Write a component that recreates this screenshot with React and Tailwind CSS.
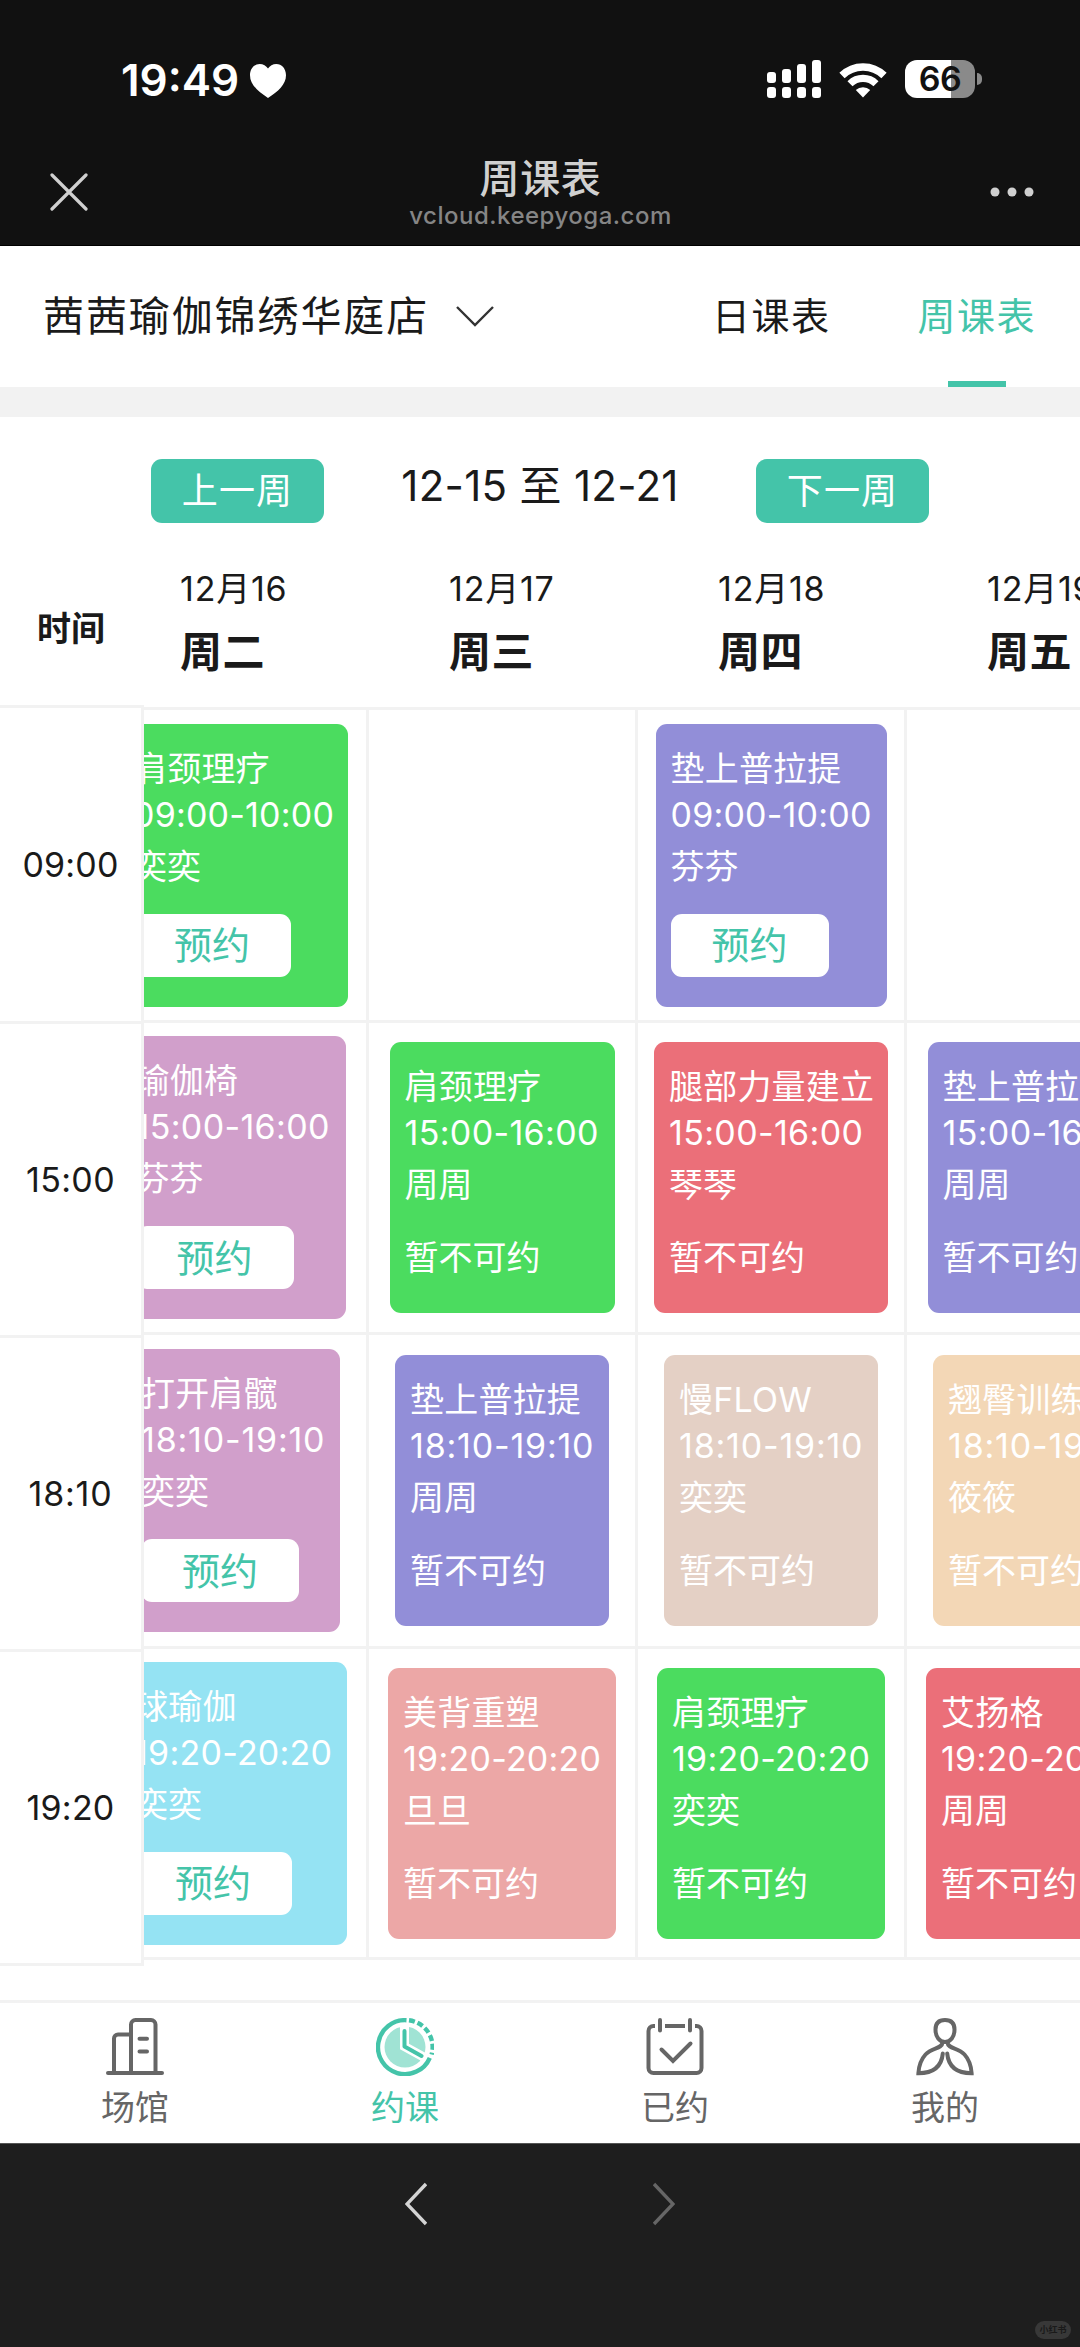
import React from "react";

const weekDays = [
  { date: "12月16", day: "周二" },
  { date: "12月17", day: "周三" },
  { date: "12月18", day: "周四" },
  { date: "12月19", day: "周五" },
];

const rows = [
  {
    time: "09:00",
    labelHeight: "h-[316px]",
    height: "h-[313px]",
    tracking: "tracking-[0.2px]",
    lessons: [
      { name: "肩颈理疗", time: "09:00-10:00", coach: "奕奕", open: true, color: "bg-[#4bdc5f]", width: "w-[230px]" },
      null,
      { name: "垫上普拉提", time: "09:00-10:00", coach: "芬芬", open: true, color: "bg-[#928ed8]", width: "w-[231px]" },
      null,
    ],
  },
  {
    time: "15:00",
    labelHeight: "h-[314px]",
    height: "h-[312px]",
    tracking: "tracking-[0.35px]",
    lessons: [
      { name: "瑜伽椅", time: "15:00-16:00", coach: "芬芬", open: true, color: "bg-[#d19fcb]", width: "w-[225px]" },
      { name: "肩颈理疗", time: "15:00-16:00", coach: "周周", color: "bg-[#4bdc5f]", width: "w-[225px]" },
      { name: "腿部力量建立", time: "15:00-16:00", coach: "琴琴", color: "bg-[#eb6f79]", width: "w-[234px]" },
      { name: "垫上普拉提", time: "15:00-16:00", coach: "周周", color: "bg-[#928ed8]", width: "w-[225px]" },
    ],
  },
  {
    time: "18:10",
    labelHeight: "h-[314px]",
    height: "h-[314px]",
    tracking: "tracking-[0.8px]",
    lessons: [
      { name: "打开肩髋", time: "18:10-19:10", coach: "奕奕", open: true, color: "bg-[#d19fcb]", width: "w-[214px]" },
      { name: "垫上普拉提", time: "18:10-19:10", coach: "周周", color: "bg-[#928ed8]", width: "w-[214px]" },
      { name: "慢FLOW", time: "18:10-19:10", coach: "奕奕", color: "bg-[#e4d0c5]", width: "w-[214px]" },
      { name: "翘臀训练", time: "18:10-19:10", coach: "筱筱", color: "bg-[#f3d7b6]", width: "w-[214px]" },
    ],
  },
  {
    time: "19:20",
    labelHeight: "h-[314px]",
    height: "h-[311px]",
    tracking: "tracking-[0.25px]",
    lessons: [
      { name: "球瑜伽", time: "19:20-20:20", coach: "奕奕", open: true, color: "bg-[#95e3f3]", width: "w-[228px]" },
      { name: "美背重塑", time: "19:20-20:20", coach: "旦旦", color: "bg-[#eca7a6]", width: "w-[228px]" },
      { name: "肩颈理疗", time: "19:20-20:20", coach: "奕奕", color: "bg-[#4bdc5f]", width: "w-[228px]" },
      { name: "艾扬格", time: "19:20-20:20", coach: "周周", color: "bg-[#eb6f79]", width: "w-[228px]" },
    ],
  },
];

const SignalIcon = () => (
  <svg width="54" height="38" viewBox="0 0 54 38" fill="#fff">
    <rect x="0" y="12" width="9" height="11" rx="3" />
    <rect x="15" y="9" width="9" height="14" rx="3" />
    <rect x="30" y="4" width="9" height="19" rx="3" />
    <rect x="45" y="0" width="9" height="23" rx="3" />
    <rect x="0" y="27" width="9" height="11" rx="3" />
    <rect x="15" y="27" width="9" height="11" rx="3" />
    <rect x="30" y="27" width="9" height="11" rx="3" />
    <rect x="45" y="27" width="9" height="11" rx="3" />
  </svg>
);

const WifiIcon = () => (
  <svg width="48" height="36" viewBox="0 0 48 36" fill="none">
    <path d="M3 13.5A30 30 0 0 1 45 13.5" stroke="#fff" strokeWidth="7.5" />
    <path d="M11 21.8A18.5 18.5 0 0 1 37 21.8" stroke="#fff" strokeWidth="7.2" />
    <path d="M24 35.5l-7.2-7.4a10.4 10.4 0 0 1 14.4 0z" fill="#fff" />
  </svg>
);

const VenueIcon = () => (
  <svg width="58" height="58" viewBox="0 0 58 58" fill="none" stroke="#666" strokeWidth="4" strokeLinecap="round">
    <path d="M2 55h54" />
    <path d="M8 55V20.5a4 4 0 0 1 4-4h12.5" />
    <path d="M25 55V6.5a4.5 4.5 0 0 1 4.5-4.5H45a4.5 4.5 0 0 1 4.5 4.5V55" />
    <path d="M33.5 20.8h7.5M33.5 33.5h7.5" />
  </svg>
);

const ClockIcon = () => (
  <svg width="58" height="58" viewBox="0 0 58 58" fill="none">
    <circle cx="29" cy="29" r="20.5" fill="#a0e3d4" />
    <path d="M28.5 8v20.5l20 11" stroke="#fff" strokeWidth="9" />
    <path d="M28.5 13v15.5L45.5 38" stroke="#44c4a9" strokeWidth="4" strokeLinecap="round" strokeLinejoin="round" />
    <path d="M30.5 2.2A27 27 0 1 0 53.8 39.8" stroke="#44c4a9" strokeWidth="4.4" />
    <path d="M33 2.3A27 27 0 0 1 55.6 36.5" stroke="#44c4a9" strokeWidth="4.4" strokeDasharray="6 2.9" />
  </svg>
);

const BookedIcon = () => (
  <svg width="58" height="58" viewBox="0 0 58 58" fill="none" stroke="#666" strokeWidth="4">
    <path d="M9 8H7.5A5 5 0 0 0 2.5 13V50a5 5 0 0 0 5 5h43a5 5 0 0 0 5-5V13a5 5 0 0 0-5-5H49" />
    <path d="M19 8h20" />
    <path d="M14 2v10.5M44 2v10.5" strokeLinecap="round" />
    <path d="M15.5 31.5L27 43l17.5-17.5" strokeLinecap="round" />
  </svg>
);

const MineIcon = () => (
  <svg width="58" height="58" viewBox="0 0 58 58" fill="none" stroke="#666" strokeWidth="4" strokeLinecap="round">
    <path d="M29 2c6.5 0 9.5 3.8 9.5 9.5C38.5 19 34.5 24 29 24s-9.5-5-9.5-12.5C19.5 5.8 22.5 2 29 2z" />
    <path d="M26.5 24.5C26 31 16 29.5 9.5 36.5 4.5 42 2.8 48 2.4 55.2 17.5 55.2 25.5 49 26.8 35.5" />
    <path d="M31.5 24.5C32 31 42 29.5 48.5 36.5c5 5.5 6.7 11.5 7.1 18.7C40.5 55.2 32.5 49 31.2 35.5" />
  </svg>
);

const navItems = [
  { label: "场馆", icon: VenueIcon },
  { label: "约课", icon: ClockIcon, active: true },
  { label: "已约", icon: BookedIcon },
  { label: "我的", icon: MineIcon },
];

const LessonCard = ({ lesson, tracking }) => (
  <div
    className={`${lesson.color} ${lesson.width} ${lesson.open ? "h-[283px]" : "h-[271px]"} shrink-0 rounded-[11px] pl-[15px] pt-[22px] text-white text-[34px] whitespace-nowrap`}
  >
    <div className="h-[46px] leading-[46px] tracking-[0.2px]">{lesson.name}</div>
    <div className={`h-[46px] leading-[46px] ${tracking}`}>{lesson.time}</div>
    <div className="h-[58px] leading-[57px]">{lesson.coach}</div>
    {lesson.open ? (
      <button className="mt-[18px] block h-[63px] w-[158px] rounded-[11px] bg-white text-[38px] leading-[62px] text-[#44c4a9]">
        预约
      </button>
    ) : (
      <div className="mt-[19px] h-[50px] leading-[50px]">暂不可约</div>
    )}
  </div>
);

const App = () => {
  return (
    <div className="flex h-[2347px] w-[1080px] flex-col overflow-hidden bg-white font-[Inter,'Noto_Sans_CJK_SC',sans-serif] text-[#1a1a1a]">
      <header className="h-[246px] shrink-0 border-b border-black bg-[#111]">
        <div className="flex h-[138px] items-start justify-between pl-[121px] pr-[98px] pt-[60px]">
          <div className="flex items-start gap-[11px]">
            <span className="text-[44px] font-semibold leading-[41px] text-white">19:49</span>
            <svg className="mt-[4px]" width="36" height="34" viewBox="0 0 36 34" fill="#fff">
              <path d="M18 34C8 27.5 0 20.5 0 11.2 0 4.6 4.3 0 9.7 0 13.2 0 16.2 1.7 18 4.6 19.8 1.7 22.8 0 26.3 0 31.7 0 36 4.6 36 11.2 36 20.5 28 27.5 18 34z" />
            </svg>
          </div>
          <div className="flex items-start">
            <SignalIcon />
            <div className="ml-[18px] mt-[2px]">
              <WifiIcon />
            </div>
            <div className="ml-[18px] flex items-center gap-[2px]">
              <div className="flex h-[38px] w-[70px] items-center justify-center rounded-[12px] bg-linear-to-r from-white from-66% to-[#8a8a8a] to-66% text-[34px] font-semibold leading-[38px] tracking-[-0.5px] text-[#111]">
                66
              </div>
              <div className="h-[12px] w-[5px] rounded-r-full bg-[#8a8a8a]" />
            </div>
          </div>
        </div>
        <div className="flex items-start justify-between pl-[50px] pr-[46px]">
          <svg className="mt-[35px]" width="38" height="38" viewBox="0 0 38 38" stroke="#d0d0d0" strokeWidth="3.2" strokeLinecap="round">
            <path d="M2 2l34 34M36 2L2 36" />
          </svg>
          <div className="flex flex-col items-center pl-[3px]">
            <h1 className="mt-[21px] text-[40px] font-medium leading-[40px] tracking-[0.6px] text-[#d0d0d0]">周课表</h1>
            <p className="mt-[3px] text-[24px] font-medium leading-[28px] tracking-[0.5px] text-[#858585]">
              vcloud.keepyoga.com
            </p>
          </div>
          <svg className="mt-[49px]" width="44" height="10" viewBox="0 0 44 10" fill="#d0d0d0">
            <circle cx="5" cy="5" r="4.5" />
            <circle cx="22" cy="5" r="4.5" />
            <circle cx="39" cy="5" r="4.5" />
          </svg>
        </div>
      </header>

      <div className="flex h-[141px] shrink-0 items-start justify-between pl-[43px] pr-[44px]">
        <div className="flex items-center pt-[46px]">
          <span className="text-[41px] leading-[48px] tracking-[1.9px]">茜茜瑜伽锦绣华庭店</span>
          <svg className="ml-[27px]" width="38" height="21" viewBox="0 0 38 21" fill="none" stroke="#333" strokeWidth="2.4">
            <path d="M1 1l18 18L37 1" />
          </svg>
        </div>
        <div className="flex text-[38px] leading-[48px] tracking-[1.5px]">
          <div className="mr-[87px] pt-[46px]">日课表</div>
          <div className="flex h-[141px] flex-col items-center justify-between pt-[46px] text-[#44c4a9]">
            周课表
            <div className="h-[6px] w-[58px] bg-[#44c4a9]" />
          </div>
        </div>
      </div>

      <div className="h-[30px] shrink-0 bg-[#f2f2f2]" />

      <div className="flex h-[136px] shrink-0 items-start px-[151px] pt-[42px]">
        <button className="h-[64px] w-[173px] rounded-[11px] bg-[#44c4a9] text-[36px] leading-[64px] tracking-[1.2px] text-white">
          上一周
        </button>
        <div className="grow text-center text-[42px] leading-[54px] tracking-[0.3px]">12-15 至 12-21</div>
        <button className="h-[64px] w-[173px] rounded-[11px] bg-[#44c4a9] text-[36px] leading-[64px] tracking-[1.2px] text-white">
          下一周
        </button>
      </div>

      <div className="flex h-[1447px] shrink-0">
        <div className="w-[144px] shrink-0">
          <div className="h-[155px] border-b-3 border-[#f2f2f2] pt-[51px] text-center text-[34px] font-bold leading-[50px]">
            <span className="mr-[2px]">时间</span>
          </div>
          {rows.map((row) => (
            <div
              key={row.time}
              className={`${row.labelHeight} ${row.tracking} flex items-center justify-center border-b-3 border-r-3 border-[#f2f2f2] text-[34px]`}
            >
              {row.time}
            </div>
          ))}
        </div>
        <div className="grow overflow-hidden">
          <div className="-ml-[44px] w-[1076px]">
            <div className="flex h-[157px] border-b-3 border-[#f2f2f2]">
              {weekDays.map((item) => (
                <div key={item.day} className="w-[269px] shrink-0 pl-[80px] pt-[11px]">
                  <div className="text-[34px] leading-[50px] tracking-[0.8px]">{item.date}</div>
                  <div className="mt-[10px] text-[42px] font-bold leading-[56px] tracking-[0.6px]">{item.day}</div>
                </div>
              ))}
            </div>
            {rows.map((row) => (
              <div key={row.time} className={`${row.height} flex border-b-3 border-[#f2f2f2]`}>
                {row.lessons.map((lesson, i) => (
                  <div key={i} className="flex w-[269px] shrink-0 items-center justify-center border-r-3 border-[#f2f2f2]">
                    {lesson && <LessonCard lesson={lesson} tracking={row.tracking} />}
                  </div>
                ))}
              </div>
            ))}
          </div>
        </div>
      </div>

      <nav className="grid h-[143px] shrink-0 grid-cols-4 border-t-3 border-[#f2f2f2]">
        {navItems.map(({ label, icon: Icon, active }) => (
          <div
            key={label}
            className={`flex flex-col items-center pt-[15px] text-[34px] ${active ? "text-[#44c4a9]" : "text-[#666]"}`}
          >
            <Icon />
            <span className="mt-[7px] leading-[50px]">{label}</span>
          </div>
        ))}
      </nav>

      <footer className="flex h-[204px] shrink-0 flex-col justify-between border-t border-[#555] bg-[#1e1e1e]">
        <div className="flex justify-center gap-[226px] pt-[38px]">
          <svg width="22" height="44" viewBox="0 0 22 44" fill="none" stroke="#d4d4d4" strokeWidth="3.4">
            <path d="M21 2L2 22l19 20" />
          </svg>
          <svg width="22" height="44" viewBox="0 0 22 44" fill="none" stroke="#666" strokeWidth="3.4">
            <path d="M1 2l19 20L1 42" />
          </svg>
        </div>
        <div className="mb-[8px] mr-[9px] h-[18px] w-[36px] self-end rounded-full bg-[#383838] text-center text-[9px] font-bold leading-[18px] text-[#1a1a1a]">
          小红书
        </div>
      </footer>
    </div>
  );
};

export default App;
